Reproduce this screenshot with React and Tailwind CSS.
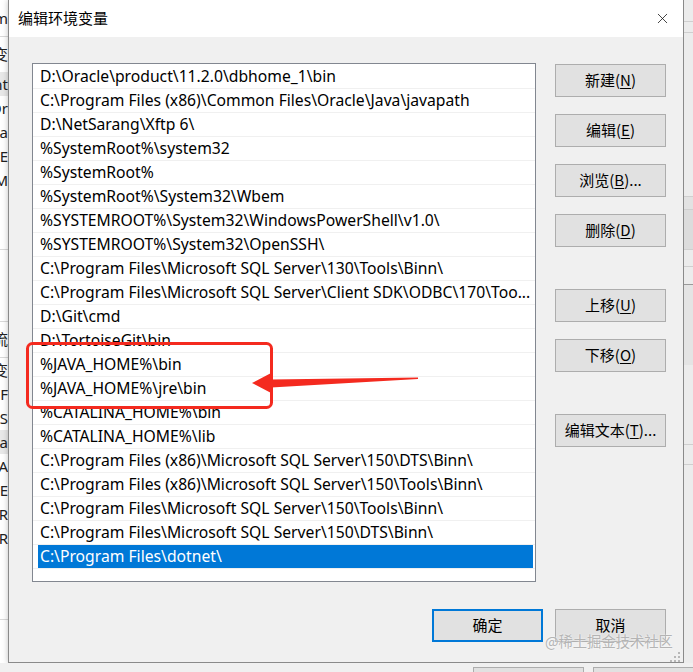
import { X } from "lucide-react";

const PATHS = [
  "D:\\Oracle\\product\\11.2.0\\dbhome_1\\bin",
  "C:\\Program Files (x86)\\Common Files\\Oracle\\Java\\javapath",
  "D:\\NetSarang\\Xftp 6\\",
  "%SystemRoot%\\system32",
  "%SystemRoot%",
  "%SystemRoot%\\System32\\Wbem",
  "%SYSTEMROOT%\\System32\\WindowsPowerShell\\v1.0\\",
  "%SYSTEMROOT%\\System32\\OpenSSH\\",
  "C:\\Program Files\\Microsoft SQL Server\\130\\Tools\\Binn\\",
  "C:\\Program Files\\Microsoft SQL Server\\Client SDK\\ODBC\\170\\Too...",
  "D:\\Git\\cmd",
  "D:\\TortoiseGit\\bin",
  "%JAVA_HOME%\\bin",
  "%JAVA_HOME%\\jre\\bin",
  "%CATALINA_HOME%\\bin",
  "%CATALINA_HOME%\\lib",
  "C:\\Program Files (x86)\\Microsoft SQL Server\\150\\DTS\\Binn\\",
  "C:\\Program Files (x86)\\Microsoft SQL Server\\150\\Tools\\Binn\\",
  "C:\\Program Files\\Microsoft SQL Server\\150\\Tools\\Binn\\",
  "C:\\Program Files\\Microsoft SQL Server\\150\\DTS\\Binn\\",
  "C:\\Program Files\\dotnet\\",
];

// the window behind the dialog, only a sliver of it shows on the left
const BEHIND = [
  { h: "h-[37px]", t: "m", line: true },
  { h: "h-[35px]", t: "变" },
  { h: "h-[24px]", t: "nt", gray: true },
  { h: "h-[24px]", t: "Or" },
  { h: "h-[24px]", t: "a" },
  { h: "h-[24px]", t: "E" },
  { h: "h-[24px]", t: "M" },
  { h: "h-[58px]", t: "", line: true },
  { h: "h-[72px]", t: "", line: true },
  { h: "h-[36px]", t: "流", line: true },
  { h: "h-[24px]", t: "变" },
  { h: "h-[24px]", t: "DF" },
  { h: "h-[24px]", t: "DS" },
  { h: "h-[24px]", t: "a", gray: true },
  { h: "h-[24px]", t: "A" },
  { h: "h-[24px]", t: "E" },
  { h: "h-[24px]", t: "R" },
  { h: "h-[24px]", t: "R" },
  { h: "h-[70px]", t: "", line: true },
];

const Btn = ({ children, primary }) => (
  <div
    className={
      "w-[111px] h-[33px] flex items-center justify-center bg-[#e1e1e1] text-[15px] text-black " +
      (primary ? "border-2 border-[#0078d7]" : "border border-[#adadad]")
    }
  >
    {children}
  </div>
);

const Key = ({ k }) => <span className="underline underline-offset-2">{k}</span>;

const App = () => {
  return (
    <div className="relative w-[693px] h-[672px] overflow-hidden bg-[#f0f0f0] flex flex-col font-['Noto_Sans','Noto_Sans_CJK_SC',sans-serif]">
      <div className="flex h-[663px]">
        {/* left sliver of background window */}
        <div className="w-[8px] flex flex-col bg-white overflow-hidden">
          {BEHIND.map((r, i) => (
            <div
              key={i}
              className={
                "shrink-0 flex items-center justify-end whitespace-nowrap text-[15px] text-[#222] " +
                r.h +
                (r.line ? " border-b border-[#d9d9d9]" : "") +
                (r.gray ? " bg-[#e8e8e8]" : "")
              }
            >
              {r.t}
            </div>
          ))}
        </div>

        {/* dialog */}
        <div className="w-[676px] flex flex-col border border-t-0 border-[#8a8a8a] bg-[#f0f0f0] shadow-[0_0_6px_rgba(0,0,0,0.25)]">
          <div className="h-[37px] shrink-0 bg-white flex items-center justify-between pl-[9px] pr-[12px]">
            <span className="text-[15px] text-black font-['Noto_Sans_CJK_SC',sans-serif]">编辑环境变量</span>
            <X size={17} strokeWidth={1.1} className="text-[#111]" />
          </div>

          <div className="flex pl-[23px] pt-[26px]">
            <div className="w-[504px] h-[519px] border border-[#828790] bg-white pt-px overflow-hidden">
              {PATHS.map((p, i) => {
                const sel = i === PATHS.length - 1;
                return (
                  <div key={i} className="h-[24px] border-b border-[#f0f0f0] pl-[5px] pr-[2px]">
                    <div
                      className={
                        "h-full flex items-center pl-[2px] pt-px whitespace-nowrap overflow-hidden text-[15.7px] " +
                        (sel ? "bg-[#0078d7] text-white" : "text-black")
                      }
                    >
                      {p}
                    </div>
                  </div>
                );
              })}
            </div>

            <div className="ml-[19px] mt-px flex flex-col font-['Noto_Sans_CJK_SC',sans-serif]">
              <Btn>
                新建(<Key k="N" />)
              </Btn>
              <div className="h-[17px]" />
              <Btn>
                编辑(<Key k="E" />)
              </Btn>
              <div className="h-[17px]" />
              <Btn>
                浏览(<Key k="B" />)...
              </Btn>
              <div className="h-[17px]" />
              <Btn>
                删除(<Key k="D" />)
              </Btn>
              <div className="h-[42px]" />
              <Btn>
                上移(<Key k="U" />)
              </Btn>
              <div className="h-[17px]" />
              <Btn>
                下移(<Key k="O" />)
              </Btn>
              <div className="h-[42px]" />
              <Btn>
                编辑文本(<Key k="T" />)...
              </Btn>
            </div>
          </div>

          <div className="flex justify-end gap-[12px] pr-[17px] pt-[27px] font-['Noto_Sans_CJK_SC',sans-serif]">
            <Btn primary>确定</Btn>
            <Btn>取消</Btn>
          </div>
        </div>

        {/* right sliver of background window */}
        <div className="flex-1 flex flex-col bg-[#ececec]">
          <div className="h-[22px] shrink-0 border-b border-[#cfcfcf]" />
          <div className="h-[11px] shrink-0 border-b border-[#cfcfcf]" />
          <div className="h-[164px] shrink-0 border-b border-[#cfcfcf]" />
          <div className="h-[13px] shrink-0 border-b border-[#cfcfcf] bg-[#e2e2e2]" />
          <div className="h-[40px] shrink-0 border-b border-[#cfcfcf] bg-[#dcdcdc]" />
          <div className="h-[17px] shrink-0 border-b border-[#cfcfcf]" />
          <div className="h-[18px] shrink-0 border-b border-[#9a9a9a]" />
          <div className="h-[80px] shrink-0 bg-[#e4e4e4]" />
          <div className="h-[80px] shrink-0 border-b border-[#cfcfcf]" />
          <div className="h-[20px] shrink-0 border-b border-[#cfcfcf]" />
          <div className="flex-1" />
        </div>
      </div>

      {/* bottom sliver */}
      <div className="flex-1 flex bg-[#f0f0f0]">
        <div className="w-[473px]" />
        <div className="w-[111px] mt-[4px] border border-b-0 border-[#adadad] bg-[#e1e1e1]" />
        <div className="w-[9px]" />
        <div className="flex-1 mt-[4px] border border-b-0 border-r-0 border-[#adadad] bg-[#e1e1e1]" />
      </div>

      {/* watermark */}
      <div className="absolute left-[545px] top-[634px] text-[14.3px] leading-none text-[#b4b4b4] font-['Noto_Sans_CJK_SC',sans-serif] [text-shadow:0_0_2px_#fff]">
        @稀土掘金技术社区
      </div>

      {/* resize grip */}
      <svg className="absolute left-[668px] top-[650px]" width="13" height="13" viewBox="0 0 13 13">
        {[
          [10, 2],
          [6, 6],
          [10, 6],
          [2, 10],
          [6, 10],
          [10, 10],
        ].map(([x, y], i) => (
          <rect key={i} x={x} y={y} width="2" height="2" fill="#b8b8b8" />
        ))}
      </svg>

      {/* red annotation */}
      <svg className="absolute left-0 top-0 pointer-events-none" width="693" height="672">
        <rect x="27.5" y="343.5" width="244" height="64" rx="5" fill="none" stroke="#f42a1f" strokeWidth="3" />
        <polygon
          points="252,383 273,372 271,379.5 418,377.5 418,379 271,387.5 273,394"
          fill="#f42a1f"
        />
      </svg>
    </div>
  );
};

export default App;
